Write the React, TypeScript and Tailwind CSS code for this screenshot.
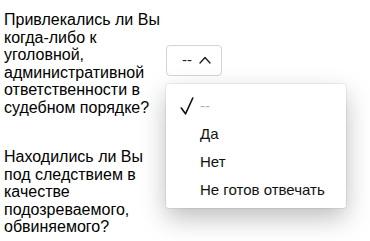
import React from 'react';

const questions = [
  'Привлекались ли Вы когда-либо к уголовной, административной ответственности в судебном порядке?',
  'Находились ли Вы под следствием в качестве подозреваемого, обвиняемого?',
];

const options = ['--', 'Да', 'Нет', 'Не готов отвечать'];

const ChevronUp = () => (
  <svg width="12" height="8" viewBox="0 0 12 8" fill="none">
    <polyline points="1,7 6,1.5 11,7" stroke="#222" strokeWidth="1.4" strokeLinecap="round" strokeLinejoin="round" />
  </svg>
);

const Check = () => (
  <svg width="14" height="18" viewBox="0 0 14 18" fill="none">
    <polyline points="1.3,11 5.5,16.8 12.8,1" stroke="#111" strokeWidth="1.6" strokeLinecap="round" strokeLinejoin="round" />
  </svg>
);

const Select = () => (
  <div className="ml-px flex h-[31px] w-[56px] shrink-0 items-center gap-[7px] rounded-[4px] border border-[#d4d4d4] bg-white pl-[15px] text-[15px] text-[#222]">
    <span>--</span>
    <ChevronUp />
  </div>
);

const App = () => {
  return (
    <div
      className="relative h-[241px] w-[370px] overflow-hidden bg-white pl-[4px] pt-[11px] text-black"
      style={{ fontFamily: '"Liberation Sans", Arial, sans-serif' }}
    >
      <div className="flex flex-col gap-[32px]">
        {questions.map((q, i) => (
          <div key={i} className="flex items-center">
            <p className="w-[161px] text-[16px] leading-[17.5px]">{q}</p>
            <div className="mb-[7px]">
              <Select />
            </div>
          </div>
        ))}
      </div>

      {/* Open dropdown */}
      <div className="absolute left-[166px] top-[84px] w-[180px] rounded-[3px] bg-white pb-[4px] pt-[8px] shadow-[0_0_0_1px_rgba(0,0,0,0.06),0_10px_26px_rgba(0,0,0,0.26)]">
        {options.map((opt, i) => (
          <div key={opt} className="flex h-[28px] items-center">
            <div className="flex w-[34px] justify-end pr-[6px]">{i === 0 && <Check />}</div>
            <span className={`text-[15px] ${i === 0 ? 'text-[#b0b0b0]' : 'text-[#111]'}`}>{opt}</span>
          </div>
        ))}
      </div>
    </div>
  );
};

export default App;
